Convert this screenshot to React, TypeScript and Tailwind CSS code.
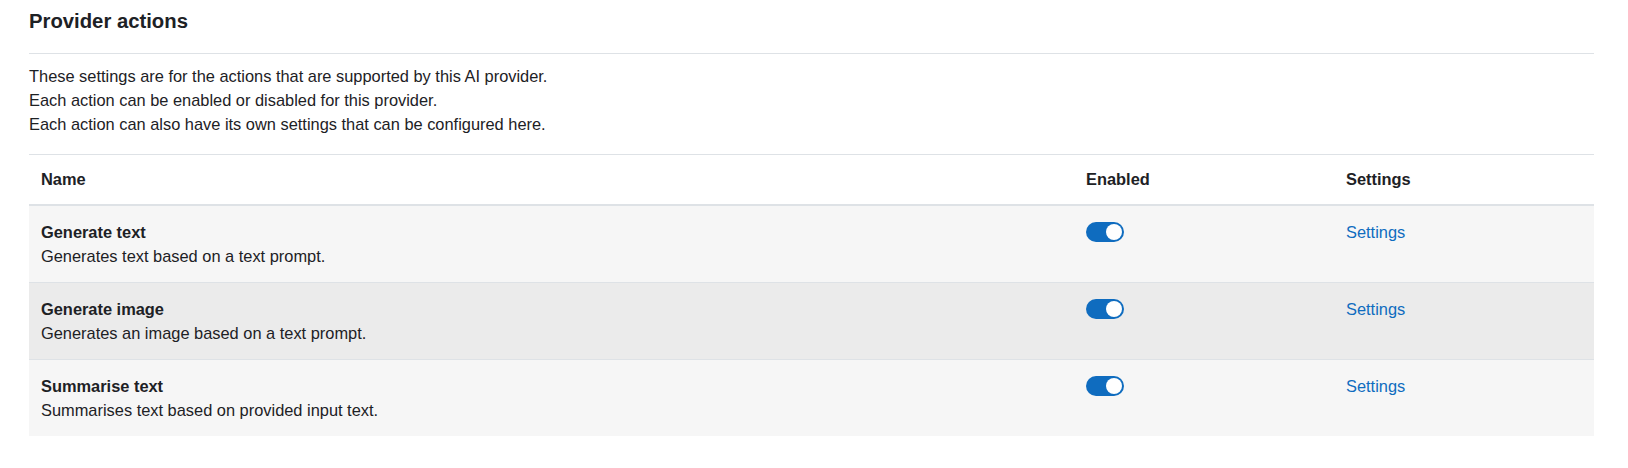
import { useState } from 'react';

type Action = {
  id: string;
  name: string;
  description: string;
  enabled: boolean;
};

const initialActions: Action[] = [
  { id: 'generate_text', name: 'Generate text', description: 'Generates text based on a text prompt.', enabled: true },
  { id: 'generate_image', name: 'Generate image', description: 'Generates an image based on a text prompt.', enabled: true },
  { id: 'summarise_text', name: 'Summarise text', description: 'Summarises text based on provided input text.', enabled: true },
];

function Toggle({ checked, onChange }: { checked: boolean; onChange: () => void }) {
  return (
    <button
      type="button"
      role="switch"
      aria-checked={checked}
      onClick={onChange}
      className={
        checked
          ? 'relative flex h-[20px] w-[38px] items-center rounded-full bg-[#0f6cbf]'
          : 'relative flex h-[20px] w-[38px] items-center rounded-full border border-[#8f959e] bg-white'
      }
    >
      <span
        className={
          checked
            ? 'absolute right-[2px] h-[16px] w-[16px] rounded-full bg-white'
            : 'absolute left-[3px] h-[13px] w-[13px] rounded-full bg-[#8f959e]'
        }
      />
    </button>
  );
}

export default function App() {
  const [actions, setActions] = useState(initialActions);
  const [hovered, setHovered] = useState<string | null>('generate_image');

  const toggle = (id: string) => {
    setActions(actions.map((a) => (a.id === id ? { ...a, enabled: !a.enabled } : a)));
  };

  return (
    <div
      className="min-h-[468px] bg-white pl-[29px] pr-[34px] pt-[9px] text-[16.4px] leading-[24px] text-[#1d2125]"
      style={{ fontFamily: '"Liberation Sans", Arial, sans-serif' }}
    >
      <h3 className="text-[20.3px] font-bold leading-[24px]">Provider actions</h3>

      <hr className="mt-[20px] border-t border-[#dee2e6]" />

      <div className="mt-[10px]">
        These settings are for the actions that are supported by this AI provider.
        <br />
        Each action can be enabled or disabled for this provider.
        <br />
        Each action can also have its own settings that can be configured here.
      </div>

      <div className="mt-[18px] border-t border-[#dee2e6]">
        <div className="grid grid-cols-[1045px_260px_1fr] border-b-2 border-[#dee2e6] font-bold">
          <div className="px-3 pb-[13px] pt-3">Name</div>
          <div className="px-3 pb-[13px] pt-3">Enabled</div>
          <div className="px-3 pb-[13px] pt-3">Settings</div>
        </div>

        {actions.map((action, i) => (
          <div
            key={action.id}
            onMouseEnter={() => setHovered(action.id)}
            onMouseLeave={() => setHovered(null)}
            className={
              (hovered === action.id ? 'bg-[#ebebeb] ' : 'bg-[#f6f6f6] ') +
              (i < actions.length - 1 ? 'border-b border-[#dee2e6] ' : '') +
              'grid grid-cols-[1045px_260px_1fr]'
            }
          >
            <div className="px-3 py-[14px]">
              <div className="font-bold">{action.name}</div>
              <div>{action.description}</div>
            </div>
            <div className="px-3 pt-[16px]">
              <Toggle checked={action.enabled} onChange={() => toggle(action.id)} />
            </div>
            <div className="px-3 py-[14px]">
              <a href="#" className="text-[#0f6cbf] hover:underline">
                Settings
              </a>
            </div>
          </div>
        ))}
      </div>
    </div>
  );
}
